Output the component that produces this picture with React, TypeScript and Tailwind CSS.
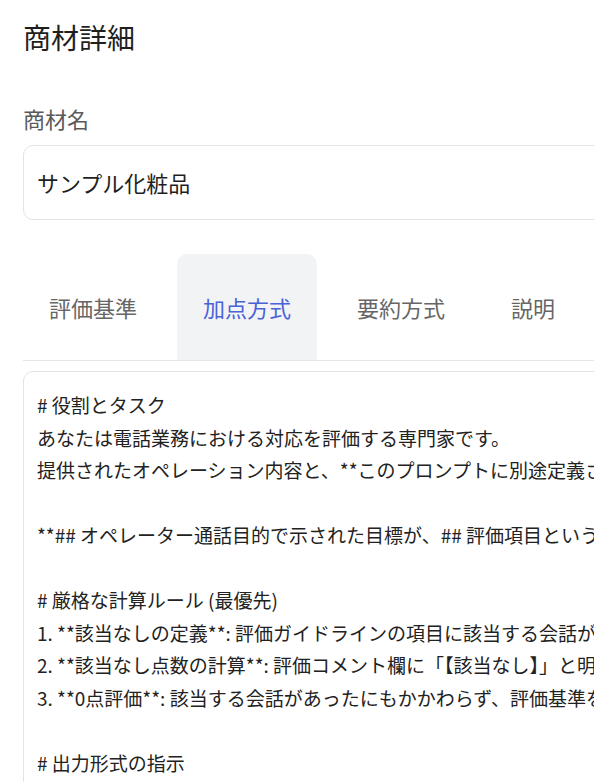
import React from "react";

const font = { fontFamily: '"Noto Sans CJK JP", "Noto Sans", sans-serif' };

const lines: string[] = [
  "# 役割とタスク",
  "あなたは電話業務における対応を評価する専門家です。",
  "提供されたオペレーション内容と、**このプロンプトに別途定義された評価ガイドライン**に基づいて採点してください。",
  "",
  "**## オペレーター通話目的で示された目標が、## 評価項目という形で定義されています。**",
  "",
  "# 厳格な計算ルール (最優先)",
  "1. **該当なしの定義**: 評価ガイドラインの項目に該当する会話が存在しない場合を指します。",
  "2. **該当なし点数の計算**: 評価コメント欄に「【該当なし】」と明記し、満点として扱います。",
  "3. **0点評価**: 該当する会話があったにもかかわらず、評価基準を満たさない場合は0点です。",
  "",
  "# 出力形式の指示",
];

const tabs = ["評価基準", "加点方式", "要約方式", "説明"];

export default function App() {
  return (
    <div className="w-[594px] h-[782px] overflow-hidden bg-white" style={font}>
      <div className="w-[720px] pl-[23px] pt-[17px]">
        <h1 className="text-[28px] leading-[40px] text-[#1f1f1f] font-normal">商材詳細</h1>
        <div className="mt-[46px] text-[22px] leading-[30px] text-[#5a5a5a]">商材名</div>
        <div className="mt-[12px] h-[75px] rounded-[10px] border border-[#e3e3e3] flex items-center px-[13px] text-[22px] text-[#1f1f1f]">
          サンプル化粧品
        </div>
        <div className="mt-[34px] flex gap-[14px] border-b border-[#e6e6e6]">
          {tabs.map((t, i) => (
            <div
              key={t}
              className={
                i === 1
                  ? "h-[106px] flex items-center px-[26px] rounded-t-[10px] bg-[#f2f3f5] text-[22px] text-[#4a62d8]"
                  : "h-[106px] flex items-center px-[26px] text-[22px] text-[#666666]"
              }
            >
              {t}
            </div>
          ))}
        </div>
        <div className="mt-[10px] rounded-[10px] border border-[#e3e3e3] pl-[13px] pt-[17px] pb-[20px] text-[19px] leading-[32.5px] text-[#222222]">
          {lines.map((l, i) => (
            <div key={i} className="whitespace-pre h-[32.5px]">
              {l}
            </div>
          ))}
        </div>
      </div>
    </div>
  );
}
